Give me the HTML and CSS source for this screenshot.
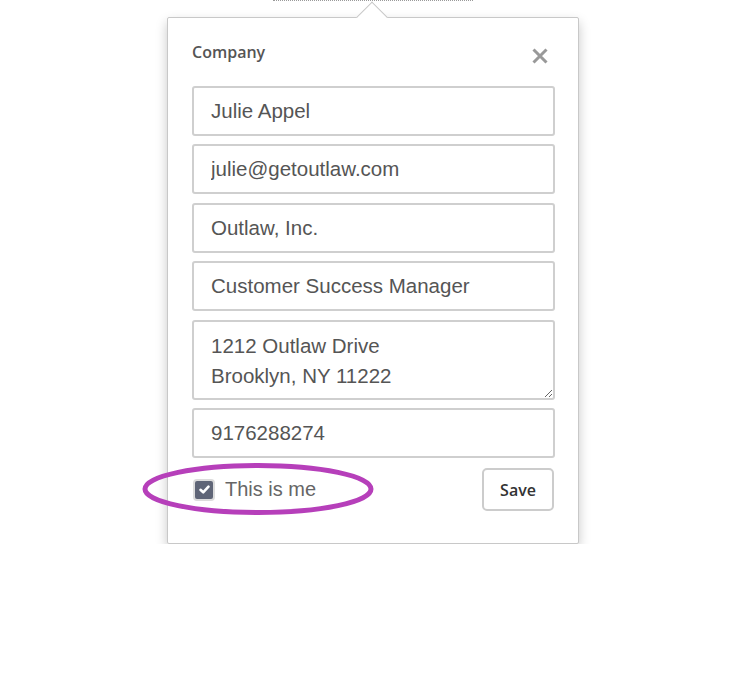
FILE: index.html
```html
<!DOCTYPE html>
<html lang="en">
<head>
  <meta charset="utf-8"/>
  <title>Contact card</title>
  <link rel="stylesheet" href="styles.css">
</head>
<body>
	<div class="anchor"></div>

	<div class="popover">
		<div class="arrow"></div>

		<div class="header">
			<span class="title">Company</span>
			<button class="close" type="button" aria-label="Close">
				<svg width="16" height="16" viewBox="0 0 16 16">
					<path d="M1.5 1.5 L14.5 14.5 M14.5 1.5 L1.5 14.5" stroke="#999" stroke-width="3" fill="none"/>
				</svg>
			</button>
		</div>

		<form class="fields">
			<input class="field" type="text" value="Julie Appel">
			<input class="field" type="text" value="julie@getoutlaw.com">
			<input class="field" type="text" value="Outlaw, Inc.">
			<input class="field" type="text" value="Customer Success Manager">
			<textarea class="field address">1212 Outlaw Drive
Brooklyn, NY 11222</textarea>
			<input class="field" type="text" value="9176288274">

			<div class="footer">
				<label class="me">
					<span class="check">
						<svg width="13" height="13" viewBox="0 0 13 13">
							<path d="M2.5 6.8 L5.2 9.3 L10.5 3.6" stroke="#fff" stroke-width="2.6" fill="none" stroke-linecap="round" stroke-linejoin="round"/>
						</svg>
					</span>
					This is me
				</label>
				<button class="save" type="button">Save</button>

				<svg class="circle" width="240" height="62" viewBox="0 0 240 62">
					<ellipse cx="118" cy="29" rx="113" ry="23.5" stroke="#b63fba" stroke-width="5" fill="none"/>
				</svg>
			</div>
		</form>
	</div>
</body>
</html>
```

FILE: styles.css
```css
	body {
		margin: 0;
		background-color: #ffffff;
		font-family: "Liberation Sans", Arial, sans-serif;
		color: #555555;
	}

	.anchor {
		width: 200px;
		margin-left: 273px;
		border-top: 1px dotted #9a9a9a;
	}

	.popover {
		position: relative;
		width: 362px;
		margin-top: 16px;
		margin-left: 167px;
		padding: 24px 24px 32px 24px;
		background-color: #ffffff;
		border: 1px solid #c8c8c8;
		border-radius: 2px;
		box-shadow: 0 5px 12px rgba(0, 0, 0, 0.22);
	}

	.arrow {
		position: absolute;
		top: -12px;
		left: 193px;
		width: 21px;
		height: 21px;
		background-color: #ffffff;
		border-top: 1px solid #c8c8c8;
		border-left: 1px solid #c8c8c8;
		transform: rotate(45deg);
	}

	.header {
		display: flex;
		justify-content: space-between;
		align-items: flex-start;
		height: 44px;
	}

	.title {
		font-family: "Open Sans", sans-serif;
		font-weight: 600;
		font-size: 16px;
		line-height: 20px;
		color: #555555;
	}

	.close {
		margin: 6px 6px 0 0;
		padding: 0;
		border: none;
		background: none;
		width: 16px;
		height: 16px;
	}

	.close svg {
		display: block;
	}

	.fields {
		display: flex;
		flex-direction: column;
		gap: 8.4px;
		margin: 0;
	}

	.field {
		box-sizing: border-box;
		width: 363px;
		height: 50px;
		margin: 0;
		padding: 0 17px;
		border: 2px solid #cfcfcf;
		border-radius: 3px;
		font-family: "Liberation Sans", Arial, sans-serif;
		font-size: 20.5px;
		color: #555555;
		background-color: #ffffff;
	}

	.address {
		height: 80px;
		padding-top: 9px;
		line-height: 30px;
		resize: vertical;
		overflow: hidden;
	}

	.footer {
		position: relative;
		display: flex;
		justify-content: space-between;
		align-items: center;
		margin-top: 2px;
	}

	.me {
		display: flex;
		align-items: center;
		gap: 10px;
		font-size: 20px;
		color: #666666;
	}

	.check {
		display: flex;
		align-items: center;
		justify-content: center;
		box-sizing: border-box;
		width: 22px;
		height: 22px;
		margin-left: 1px;
		background-color: #5f6577;
		border: 2px solid #dcdcdc;
		border-radius: 4px;
	}

	.save {
		box-sizing: border-box;
		width: 72px;
		height: 43px;
		border: 2px solid #cccccc;
		border-radius: 5px;
		background-color: #ffffff;
		font-family: "Open Sans", sans-serif;
		font-weight: 600;
		font-size: 16px;
		color: #333333;
	}

	.circle {
		position: absolute;
		left: -52px;
		top: -8px;
	}
```
